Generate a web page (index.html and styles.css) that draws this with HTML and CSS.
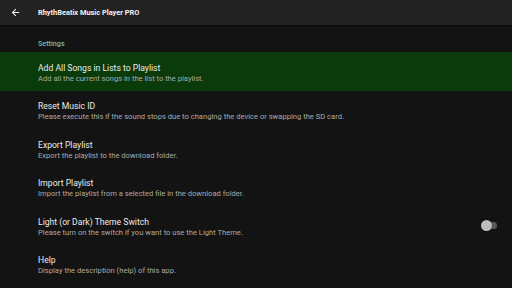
FILE: index.html
```html
<!DOCTYPE html>
<html lang="en">
  <head>
    <meta charset="UTF-8" />
    <meta name="viewport" content="width=device-width, initial-scale=1.0" />
    <title>Settings - RhythBeatix Music Player PRO</title>
    <link rel="stylesheet" href="styles.css">
  </head>
  <body>
    <header class="toolbar">
      <a href="#" class="toolbar__back">
        <svg width="11" height="11" viewBox="0 0 24 24">
          <path d="M20 11H7.83l5.59-5.59L12 4l-8 8 8 8 1.41-1.41L7.83 13H20v-2z" fill="#fff" />
        </svg>
      </a>
      <h1 class="toolbar__title">RhythBeatix Music Player PRO</h1>
    </header>

    <main class="settings">
      <div class="settings__category">Settings</div>

      <div class="pref pref--selected">
        <div class="pref__text">
          <div class="pref__title">Add All Songs in Lists to Playlist</div>
          <div class="pref__summary">Add all the current songs in the list to the playlist.</div>
        </div>
      </div>

      <div class="pref">
        <div class="pref__text">
          <div class="pref__title">Reset Music ID</div>
          <div class="pref__summary">Please execute this if the sound stops due to changing the device or swapping the SD card.</div>
        </div>
      </div>

      <div class="pref">
        <div class="pref__text">
          <div class="pref__title">Export Playlist</div>
          <div class="pref__summary">Export the playlist to the download folder.</div>
        </div>
      </div>

      <div class="pref">
        <div class="pref__text">
          <div class="pref__title">Import Playlist</div>
          <div class="pref__summary">Import the playlist from a selected file in the download folder.</div>
        </div>
      </div>

      <div class="pref">
        <div class="pref__text">
          <div class="pref__title">Light (or Dark) Theme Switch</div>
          <div class="pref__summary">Please turn on the switch if you want to use the Light Theme.</div>
        </div>
        <div class="switch"><span class="switch__thumb"></span></div>
      </div>

      <div class="pref">
        <div class="pref__text">
          <div class="pref__title">Help</div>
          <div class="pref__summary">Display the description (help) of this app.</div>
        </div>
      </div>
    </main>
  </body>
</html>
```

FILE: styles.css
```css
body {
  margin: 0;
  height: 288px;
  overflow: hidden;
  font-family: Roboto, "Noto Sans", Arial, sans-serif;
  background: #131313;
  color: #ececec;
}

.toolbar {
  display: flex;
  align-items: center;
  height: 25px;
  background: #222222;
  box-shadow: 0 1px 1px rgba(0, 0, 0, 0.5);
  position: relative;
}

.toolbar__back {
  display: flex;
  align-items: center;
  justify-content: center;
  width: 30px;
}

.toolbar__title {
  margin: 0 0 0 8px;
  font-size: 7.4px;
  font-weight: 700;
  color: #f2f2f2;
}

.settings__category {
  padding: 14px 0 0 38px;
  height: 13px;
  font-size: 7.2px;
  font-weight: 500;
  color: #79b8ad;
}

.pref {
  display: flex;
  align-items: center;
  height: 38.5px;
  padding-left: 38px;
  padding-right: 14px;
  box-sizing: border-box;
}

.pref--selected {
  background: #0b3a0b;
}

.pref__text {
  flex: 1;
  padding-top: 4px;
}

.pref__title {
  font-size: 8.6px;
  line-height: 11px;
  color: #ececec;
}

.pref__summary {
  font-size: 7.6px;
  line-height: 10px;
  color: #a9a9a9;
}

.switch {
  position: relative;
  width: 13px;
  height: 7px;
  border-radius: 4px;
  background: #5a5a5a;
  margin-right: 1px;
}

.switch__thumb {
  position: absolute;
  left: -3px;
  top: -2px;
  width: 11px;
  height: 11px;
  border-radius: 50%;
  background: #bdbdbd;
  box-shadow: 0 0 1px rgba(0, 0, 0, 0.8);
}
```
